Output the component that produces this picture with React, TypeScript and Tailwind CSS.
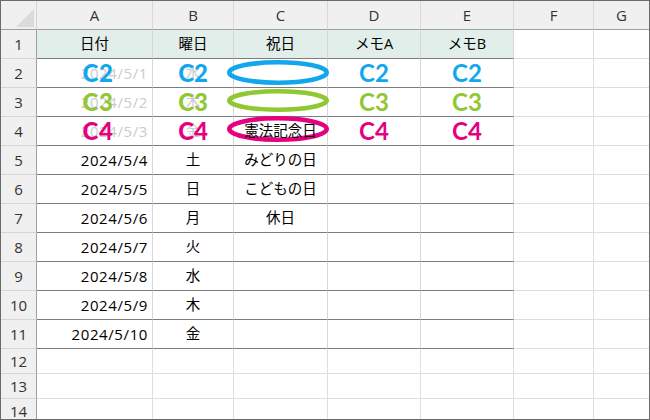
import React from "react";

const FONT = { fontFamily: '"Open Sans", "Noto Sans CJK JP", sans-serif' };
const LATO = { fontFamily: 'Lato, "Open Sans", sans-serif' };

const BLUE = "#12a7ec";
const GREEN = "#8fc832";
const PINK = "#e5007f";

type Mark = { label: string; color: string; ellipseTop: number; ellipseH: number };

const marks: Record<number, Mark> = {
  2: { label: "C2", color: BLUE, ellipseTop: 1, ellipseH: 25 },
  3: { label: "C3", color: GREEN, ellipseTop: 1, ellipseH: 23 },
  4: { label: "C4", color: PINK, ellipseTop: -1, ellipseH: 26 },
};

const data: { a: string; b: string; c: string }[] = [
  { a: "2024/5/1", b: "水", c: "" },
  { a: "2024/5/2", b: "木", c: "" },
  { a: "2024/5/3", b: "金", c: "憲法記念日" },
  { a: "2024/5/4", b: "土", c: "みどりの日" },
  { a: "2024/5/5", b: "日", c: "こどもの日" },
  { a: "2024/5/6", b: "月", c: "休日" },
  { a: "2024/5/7", b: "火", c: "" },
  { a: "2024/5/8", b: "水", c: "" },
  { a: "2024/5/9", b: "木", c: "" },
  { a: "2024/5/10", b: "金", c: "" },
];

const cols = ["A", "B", "C", "D", "E", "F", "G"];

function Ellipse({ color, h }: { color: string; h: number }) {
  const w = 102;
  const sw = 4.6;
  return (
    <svg width={w} height={h} viewBox={`0 0 ${w} ${h}`}>
      <ellipse cx={w / 2} cy={h / 2} rx={w / 2 - sw / 2} ry={h / 2 - sw / 2} fill="none" stroke={color} strokeWidth={sw} />
    </svg>
  );
}

function Overlay({ m, heavy, shift }: { m: Mark; heavy: boolean; shift?: boolean }) {
  return (
    <div
      className={`absolute inset-0 flex items-center justify-center text-[24px] leading-none ${heavy ? "font-black" : "font-bold"} ${shift ? "pl-[7px]" : ""}`}
      style={{ ...LATO, color: m.color }}
    >
      {m.label}
    </div>
  );
}

export default function App() {
  const rowHeader = "flex items-center justify-center bg-[#f0f0f0] border-r border-r-[#9f9f9f] border-b border-b-[#d6d6d6] text-[15px] text-[#333]";
  const grid = "border-r border-b border-[#dedede]";
  const tbl = "border-r border-r-[#d6d6d6] border-b border-b-[#7c7c7c]";

  return (
    <div className="w-[650px] h-[420px] overflow-hidden border border-[#6b6b6b] bg-white" style={FONT}>
      <div className="grid grid-cols-[36px_116px_81px_94px_93px_93px_80px_1fr] grid-rows-[29px_repeat(11,29px)_25px_25px_25px] text-[14.5px] text-black">
        {/* corner */}
        <div className="relative bg-[#f0f0f0] border-r border-r-[#d6d6d6] border-b border-b-[#9f9f9f]">
          <svg className="absolute left-[15px] top-[8px]" width="18" height="18" viewBox="0 0 18 18">
            <polygon points="18,0 18,18 0,18" fill="#dadada" />
          </svg>
        </div>
        {cols.map((c, i) => (
          <div
            key={c}
            className={`flex items-center justify-center bg-[#f0f0f0] border-b border-b-[#9f9f9f] text-[15px] text-[#333] ${i < cols.length - 1 ? "border-r border-r-[#d9d9d9]" : ""}`}
          >
            {c}
          </div>
        ))}

        {/* row 1 */}
        <div className={rowHeader}>1</div>
        {["日付", "曜日", "祝日", "メモA", "メモB"].map((t) => (
          <div key={t} className={`flex items-center justify-center bg-[#e2eee9] ${tbl}`}>
            {t}
          </div>
        ))}
        <div className={grid} />
        <div className="border-b border-[#dedede]" />

        {data.map((r, idx) => {
          const rn = idx + 2;
          const m = marks[rn];
          const faint = !!m;
          return (
            <React.Fragment key={rn}>
              <div className={rowHeader}>{rn}</div>
              <div className={`relative flex items-center justify-end pr-[4px] text-[15px] tracking-[0.6px] ${tbl} ${faint ? "text-[#cbcbcb]" : ""}`}>
                {r.a}
                {m && <Overlay m={m} heavy shift />}
              </div>
              <div className={`relative flex items-center justify-center ${tbl} ${faint ? "text-[#cbcbcb]" : ""}`}>
                {r.b}
                {m && <Overlay m={m} heavy />}
              </div>
              <div className={`relative flex items-center justify-center ${tbl}`}>
                {m && (
                  <div className="absolute left-[-7px]" style={{ top: m.ellipseTop }}>
                    <Ellipse color={m.color} h={m.ellipseH} />
                  </div>
                )}
                <span className="relative">{r.c}</span>
              </div>
              <div className={`relative ${tbl}`}>{m && <Overlay m={m} heavy={false} />}</div>
              <div className={`relative ${tbl}`}>{m && <Overlay m={m} heavy={false} />}</div>
              <div className={grid} />
              <div className="border-b border-[#dedede]" />
            </React.Fragment>
          );
        })}

        {[12, 13, 14].map((rn) => (
          <React.Fragment key={rn}>
            <div className={rowHeader}>{rn}</div>
            {[0, 1, 2, 3, 4, 5].map((i) => (
              <div key={i} className={grid} />
            ))}
            <div className="border-b border-[#dedede]" />
          </React.Fragment>
        ))}
      </div>
    </div>
  );
}
